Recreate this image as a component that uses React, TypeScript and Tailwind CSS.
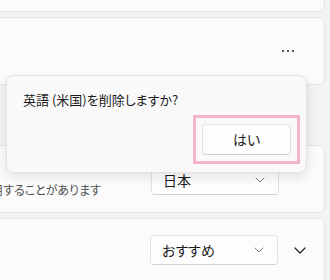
import React from "react";

const jp = "font-['Noto_Sans_CJK_JP','Noto_Sans',sans-serif] [font-feature-settings:'palt']";

const SmallChevron = () => (
  <svg width="10" height="6" viewBox="0 0 10 6" fill="none">
    <path d="M1 1l4 4 4-4" stroke="#7a7a7a" strokeWidth="1" strokeLinecap="round" strokeLinejoin="round" />
  </svg>
);

const BigChevron = () => (
  <svg width="12" height="7" viewBox="0 0 12 7" fill="none">
    <path d="M1 1l5 5 5-5" stroke="#1f1f1f" strokeWidth="1.2" strokeLinecap="round" strokeLinejoin="round" />
  </svg>
);

const Dropdown = ({ label }: { label: string }) => (
  <div className="flex h-[30px] w-[128px] items-center justify-between rounded-[4px] border border-[#e3e3e3] border-b-[#d0d0d0] bg-[#fdfdfd] pl-[11px] pr-[13px]">
    <span className="text-[14px] text-[#1b1b1b]">{label}</span>
    <SmallChevron />
  </div>
);

export default function App() {
  return (
    <div className={`relative h-[280px] w-[330px] overflow-hidden bg-[#f3f3f3] ${jp}`}>
      <div className="-ml-[20px] flex w-[345px] flex-col">
        {/* top card, mostly scrolled away */}
        <div className="-mt-[40px] h-[52px] rounded-[6px] border border-[#e5e5e5] bg-[#fbfbfb]" />

        {/* language item with more menu */}
        <div className="mt-[5px] flex h-[68px] items-center justify-end rounded-[6px] border border-[#e5e5e5] bg-[#fbfbfb] pr-[30px]">
          <div className="flex gap-[3px]">
            <span className="h-[2px] w-[2px] rounded-full bg-[#1b1b1b]" />
            <span className="h-[2px] w-[2px] rounded-full bg-[#1b1b1b]" />
            <span className="h-[2px] w-[2px] rounded-full bg-[#1b1b1b]" />
          </div>
        </div>

        <div className="h-[60px]" />

        {/* country or region */}
        <div className="flex h-[68px] items-center justify-between rounded-[6px] border border-[#e5e5e5] bg-[#fbfbfb] pr-[45px]">
          <div className="mt-[22px] flex w-[120px] justify-end">
            <span className="whitespace-nowrap text-[12px] text-[#4f4f4f]">地域に固有のコンテンツを利用することがあります</span>
          </div>
          <div className="mt-[2px]">
            <Dropdown label="日本" />
          </div>
        </div>

        {/* regional format */}
        <div className="mt-[5px] flex h-[72px] items-center justify-end rounded-[6px] border border-[#e5e5e5] bg-[#fbfbfb] pr-[18px]">
          <div className="-mt-[8px] flex items-center gap-[16px]">
            <Dropdown label="おすすめ" />
            <BigChevron />
          </div>
        </div>
      </div>

      {/* confirm flyout */}
      <div className="absolute left-[6px] top-[75px] flex h-[98px] w-[301px] flex-col rounded-[8px] border border-[#e2e2e2] bg-[#f9f9f9] shadow-[0_4px_12px_rgba(0,0,0,0.10)]">
        <p className="ml-[16px] mt-[14px] text-[13px] leading-[20px] text-[#1b1b1b]">英語 (米国)を削除しますか?</p>
        <div className="ml-[186px] mt-[5px] flex h-[49px] w-[107px] items-center justify-center border-[3px] border-[#f4b4cb]">
          <button className="flex h-[31px] w-[89px] items-center justify-center rounded-[4px] border border-[#e3e3e3] border-b-[#cfcfcf] bg-[#fdfdfd] text-[14px] text-[#1b1b1b]">
            はい
          </button>
        </div>
      </div>
    </div>
  );
}
